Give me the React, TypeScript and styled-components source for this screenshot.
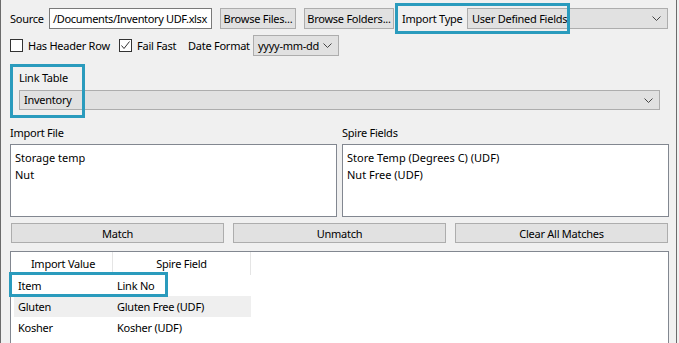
import React from 'react';
import styled, { createGlobalStyle } from 'styled-components';

const GlobalStyle = createGlobalStyle`
  body {
    margin: 0;
    background: #f0f0f0;
    font-family: "Noto Sans", "Liberation Sans", sans-serif;
    font-size: 11px;
    letter-spacing: -0.25px;
    color: #000;
  }
`;

const palette = {
  face: '#f0f0f0',
  control: '#e1e1e1',
  controlBorder: '#adadad',
  listBorder: '#828790',
  highlight: '#2a9bbd',
};

const Page = styled.div`
  position: relative;
  width: 679px;
  height: 343px;
  overflow: hidden;
`;

const Frame = styled.div`
  box-sizing: border-box;
  width: 677px;
  height: 343px;
  border-left: 1px solid #6b6b6b;
  border-right: 1px solid #6b6b6b;
  background: ${palette.face};
  padding: 8px 0 0 9px;
`;

const Row = styled.div<{ $top?: number }>`
  display: flex;
  align-items: center;
  height: 21px;
  margin-top: ${(p) => p.$top || 0}px;
  gap: ${(p) => (p.$top ? 0 : 8)}px;
`;

const Label = styled.span<{ $w: number }>`
  width: ${(p) => p.$w}px;
  flex: none;
  white-space: nowrap;
`;

const PathInput = styled.div`
  box-sizing: border-box;
  width: 163px;
  height: 21px;
  border: 1px solid #7a7a7a;
  background: #fff;
  display: flex;
  align-items: center;
  justify-content: flex-end;
  overflow: hidden;
  padding: 0 4px 0 1px;
  white-space: nowrap;
  letter-spacing: -0.35px;
`;

const Button = styled.div<{ $w: number; $h?: number }>`
  box-sizing: border-box;
  width: ${(p) => p.$w}px;
  height: ${(p) => p.$h || 21}px;
  flex: none;
  border: 1px solid ${palette.controlBorder};
  background: ${palette.control};
  display: flex;
  align-items: center;
  justify-content: center;
  white-space: nowrap;
`;

const Combo = styled.div<{ $w: number; $h?: number }>`
  box-sizing: border-box;
  width: ${(p) => p.$w}px;
  height: ${(p) => p.$h || 21}px;
  flex: none;
  border: 1px solid ${palette.controlBorder};
  background: ${palette.control};
  display: flex;
  align-items: center;
  justify-content: space-between;
  padding: 0 6px 0 4px;
  white-space: nowrap;
`;

const CheckItem = styled.label<{ $w: number }>`
  width: ${(p) => p.$w}px;
  flex: none;
  display: flex;
  align-items: center;
  gap: 5px;
  white-space: nowrap;
`;

const Box = styled.span`
  box-sizing: border-box;
  width: 13px;
  height: 13px;
  border: 1px solid #333;
  background: #fff;
  display: flex;
  align-items: center;
  justify-content: center;
`;

const LinkGroup = styled.div`
  width: 659px;
  box-sizing: border-box;
  padding: 0 9px;
  margin-top: 14px;
  display: flex;
  flex-direction: column;
  gap: 4px;
  line-height: 16px;
`;

const Lists = styled.div`
  display: grid;
  grid-template-columns: 327px 327px;
  column-gap: 5px;
  row-gap: 3px;
  margin-top: 15px;
  line-height: 16px;
`;

const ListBox = styled.div`
  box-sizing: border-box;
  height: 73px;
  border: 1px solid ${palette.listBorder};
  background: #fff;
  padding: 4px 4px;
  line-height: 17px;
  letter-spacing: 0;
`;

const ButtonRow = styled.div`
  display: flex;
  gap: 9px;
  margin-top: 6px;
  padding-left: 1px;
`;

const Table = styled.div`
  box-sizing: border-box;
  width: 659px;
  height: 100px;
  margin-top: 8px;
  border: 1px solid ${palette.listBorder};
  background: #fff;
  padding-left: 3px;
`;

const TableRow = styled.div<{ $alt?: boolean; $head?: boolean }>`
  display: grid;
  grid-template-columns: 99px 138px;
  width: 237px;
  height: ${(p) => (p.$head ? 23 : 21)}px;
  background: ${(p) => (p.$alt ? '#efefef' : '#fff')};
`;

const HeadCell = styled.div`
  display: flex;
  align-items: center;
  justify-content: center;
  border-right: 1px solid #e5e5e5;
`;

const Cell = styled.div`
  display: flex;
  align-items: center;
  padding-left: 4px;
  white-space: nowrap;
`;

const Highlight = styled.div<{ $x: number; $y: number; $w: number; $h: number }>`
  position: absolute;
  box-sizing: border-box;
  left: ${(p) => p.$x}px;
  top: ${(p) => p.$y}px;
  width: ${(p) => p.$w}px;
  height: ${(p) => p.$h}px;
  border: 3px solid ${palette.highlight};
  pointer-events: none;
`;

function Chevron() {
  return (
    <svg width="9" height="5" viewBox="0 0 9 5">
      <polyline points="0.5,0.5 4.5,4.5 8.5,0.5" fill="none" stroke="#444" strokeWidth="1" />
    </svg>
  );
}

function Check({ checked }: { checked?: boolean }) {
  return (
    <Box>
      {checked && (
        <svg width="11" height="11" viewBox="0 0 11 11">
          <polyline points="1.5,5.5 4,8.5 9.5,1.5" fill="none" stroke="#333" strokeWidth="1" />
        </svg>
      )}
    </Box>
  );
}

const mappings = [
  { value: 'Item', field: 'Link No' },
  { value: 'Gluten', field: 'Gluten Free (UDF)' },
  { value: 'Kosher', field: 'Kosher (UDF)' },
];

export default function App() {
  return (
    <Page>
      <GlobalStyle />
      <Frame>
        <Row>
          <Label $w={31}>Source</Label>
          <PathInput>/Documents/Inventory UDF.xlsx</PathInput>
          <Button $w={76}>Browse Files...</Button>
          <Button $w={90}>Browse Folders...</Button>
          <Label $w={57}>Import Type</Label>
          <Combo $w={201}>
            <span>User Defined Fields</span>
            <Chevron />
          </Combo>
        </Row>
        <Row $top={6}>
          <CheckItem $w={109}>
            <Check />
            Has Header Row
          </CheckItem>
          <CheckItem $w={69}>
            <Check checked />
            Fail Fast
          </CheckItem>
          <Label $w={65}>Date Format</Label>
          <Combo $w={86}>
            <span>yyyy-mm-dd</span>
            <Chevron />
          </Combo>
        </Row>
        <LinkGroup>
          <span>Link Table</span>
          <Combo $w={641} $h={20}>
            <span>Inventory</span>
            <Chevron />
          </Combo>
        </LinkGroup>
        <Lists>
          <span>Import File</span>
          <span>Spire Fields</span>
          <ListBox>
            <div>Storage temp</div>
            <div>Nut</div>
          </ListBox>
          <ListBox>
            <div>Store Temp (Degrees C) (UDF)</div>
            <div>Nut Free (UDF)</div>
          </ListBox>
        </Lists>
        <ButtonRow>
          <Button $w={213} $h={20}>Match</Button>
          <Button $w={213} $h={20}>Unmatch</Button>
          <Button $w={213} $h={20}>Clear All Matches</Button>
        </ButtonRow>
        <Table>
          <TableRow $head>
            <HeadCell>Import Value</HeadCell>
            <HeadCell>Spire Field</HeadCell>
          </TableRow>
          {mappings.map((m, i) => (
            <TableRow key={m.value} $alt={i % 2 === 1}>
              <Cell>{m.value}</Cell>
              <Cell>{m.field}</Cell>
            </TableRow>
          ))}
        </Table>
      </Frame>
      <Highlight $x={395} $y={3} $w={175} $h={31} />
      <Highlight $x={10} $y={64} $w={75} $h={54} />
      <Highlight $x={9} $y={272} $w={159} $h={25} />
    </Page>
  );
}
